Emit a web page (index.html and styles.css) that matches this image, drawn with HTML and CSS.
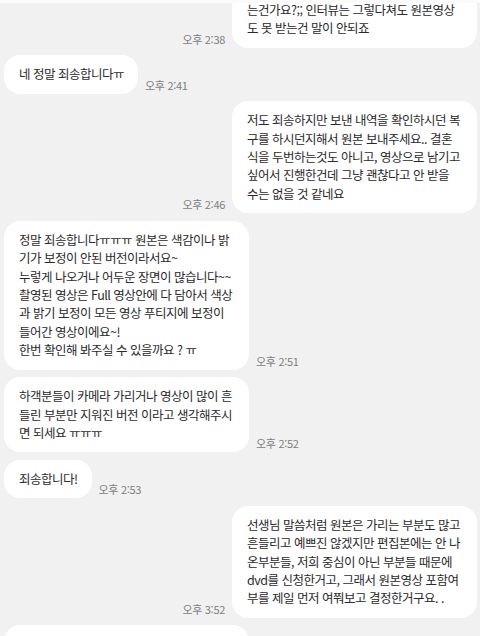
FILE: index.html
```html
<!DOCTYPE html>
<html lang="ko">
<head>
<meta charset="utf-8">
<title>채팅</title>
<link rel="stylesheet" href="styles.css">
</head>
<body>
<div class="topbar"></div>
<main class="chat">
  <div class="row row-out">
    <span class="time">오후 2:38</span>
    <div class="bubble wide">는건가요?;; 인터뷰는 그렇다쳐도 원본영상<br>도 못 받는건 말이 안되죠</div>
  </div>
  <div class="row row-in">
    <div class="bubble">네 정말 죄송합니다ㅠ</div>
    <span class="time">오후 2:41</span>
  </div>
  <div class="row row-out">
    <span class="time">오후 2:46</span>
    <div class="bubble wide">저도 죄송하지만 보낸 내역을 확인하시던 복<br>구를 하시던지해서 원본 보내주세요.. 결혼<br>식을 두번하는것도 아니고, 영상으로 남기고<br>싶어서 진행한건데 그냥 괜찮다고 안 받을<br>수는 없을 것 같네요</div>
  </div>
  <div class="row row-in">
    <div class="bubble wide">정말 죄송합니다ㅠㅠㅠ 원본은 색감이나 밝<br>기가 보정이 안된 버전이라서요~<br>누렇게 나오거나 어두운 장면이 많습니다~~<br>촬영된 영상은 Full 영상안에 다 담아서 색상<br>과 밝기 보정이 모든 영상 푸티지에 보정이<br>들어간 영상이에요~!<br>한번 확인해 봐주실 수 있을까요 ? ㅠ</div>
    <span class="time">오후 2:51</span>
  </div>
  <div class="row row-in">
    <div class="bubble wide">하객분들이 카메라 가리거나 영상이 많이 흔<br>들린 부분만 지워진 버전 이라고 생각해주시<br>면 되세요 ㅠㅠㅠ</div>
    <span class="time">오후 2:52</span>
  </div>
  <div class="row row-in">
    <div class="bubble">죄송합니다!</div>
    <span class="time">오후 2:53</span>
  </div>
  <div class="row row-out">
    <span class="time">오후 3:52</span>
    <div class="bubble wide">선생님 말씀처럼 원본은 가리는 부분도 많고<br>흔들리고 예쁘진 않겠지만 편집본에는 안 나<br>온부분들, 저희 중심이 아닌 부분들 때문에<br>dvd를 신청한거고, 그래서 원본영상 포함여<br>부를 제일 먼저 여쭤보고 결정한거구요. .</div>
  </div>
  <div class="row row-in">
    <div class="bubble wide">네~ 정말 죄송합니다ㅠㅠ 다시 확인해보고<br>연락드리겠습니다</div>
    <span class="time">오후 3:55</span>
  </div>
</main>
</body>
</html>
```
FILE: styles.css
```css
html, body {
  margin: 0;
  padding: 0;
}
body {
  background: #f1f1f1;
  width: 480px;
  height: 636px;
  overflow: hidden;
  font-family: "Noto Sans CJK KR", "Noto Sans", sans-serif;
  color: #2a2a2a;
}
.topbar {
  height: 3px;
  background: #fbfbfb;
  position: relative;
  z-index: 2;
}
.chat {
  display: flex;
  flex-direction: column;
  gap: 7.5px;
  padding: 0 3px 0 4px;
  margin-top: -12px;
}
.row {
  display: flex;
  align-items: flex-end;
  gap: 7px;
}
.row-out {
  justify-content: flex-end;
}
.bubble {
  background: #ffffff;
  border-radius: 16px;
  padding: 10px 14px 10px 15px;
  font-size: 12.5px;
  line-height: 18.4px;
  letter-spacing: -0.5px;
  white-space: nowrap;
  box-sizing: border-box;
}
.bubble.wide {
  width: 245px;
}
.time {
  font-size: 11px;
  line-height: 14px;
  color: #7d7d7d;
  margin-bottom: 2px;
  letter-spacing: -0.3px;
  white-space: nowrap;
}
```
